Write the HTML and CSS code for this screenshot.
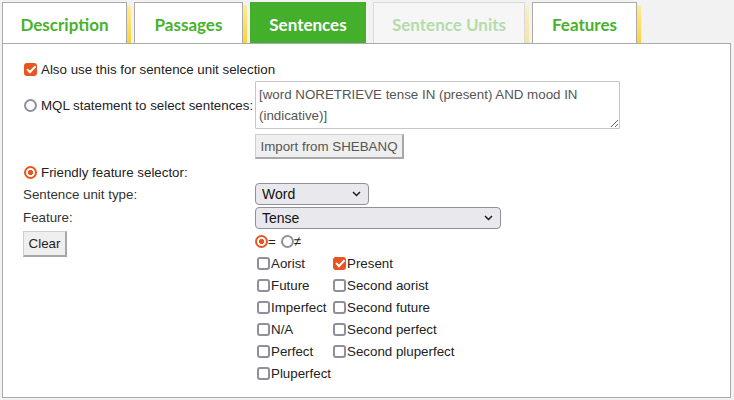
FILE: index.html
```html
<!DOCTYPE html>
<html>
<head>
<meta charset="utf-8">
<link rel="stylesheet" href="styles.css">
</head>
<body>
<div class="tabs">
  <div class="tab t-desc">Description</div>
  <div class="tab t-pass">Passages</div>
  <div class="tab t-sent active">Sentences</div>
  <div class="tab t-units disabled">Sentence Units</div>
  <div class="tab t-feat">Features</div>
</div>
<div class="panel">
  <div class="form">
    <label class="full opt row1"><input type="checkbox" class="cb" checked> Also use this for sentence unit selection</label>

    <label class="lbl opt mql"><input type="radio" name="sel" class="rb"> MQL statement to select sentences:</label>
    <textarea class="mqlbox">[word NORETRIEVE tense IN (present) AND mood IN (indicative)]</textarea>
    <div class="spacer"></div>
    <div class="importrow"><button class="btn import">Import from SHEBANQ</button></div>

    <label class="full opt friendly"><input type="radio" name="sel" class="rb" checked> Friendly feature selector:</label>

    <div class="lbl plain">Sentence unit type:</div>
    <div class="selwrap sel-word">
      <select class="sel"><option>Word</option></select>
      <svg class="chev" width="9" height="6" viewBox="0 0 9 6"><path d="M1 1 L4.5 4.5 L8 1" fill="none" stroke="#1c1c1c" stroke-width="1.5"/></svg>
    </div>

    <div class="lbl plain">Feature:</div>
    <div class="selwrap sel-feat">
      <select class="sel"><option>Tense</option></select>
      <svg class="chev" width="9" height="6" viewBox="0 0 9 6"><path d="M1 1 L4.5 4.5 L8 1" fill="none" stroke="#1c1c1c" stroke-width="1.5"/></svg>
    </div>

    <div class="clearcell"><button class="btn clear">Clear</button></div>
    <div class="values">
      <div class="eqrow">
        <label class="eq"><input type="radio" name="eq" class="rb" checked>=</label>
        <label class="eq"><input type="radio" name="eq" class="rb">≠</label>
      </div>
      <div class="checks">
        <label class="ck"><input type="checkbox" class="cb">Aorist</label>
        <label class="ck"><input type="checkbox" class="cb" checked>Present</label>
        <label class="ck"><input type="checkbox" class="cb">Future</label>
        <label class="ck"><input type="checkbox" class="cb">Second aorist</label>
        <label class="ck"><input type="checkbox" class="cb">Imperfect</label>
        <label class="ck"><input type="checkbox" class="cb">Second future</label>
        <label class="ck"><input type="checkbox" class="cb">N/A</label>
        <label class="ck"><input type="checkbox" class="cb">Second perfect</label>
        <label class="ck"><input type="checkbox" class="cb">Perfect</label>
        <label class="ck"><input type="checkbox" class="cb">Second pluperfect</label>
        <label class="ck"><input type="checkbox" class="cb">Pluperfect</label>
      </div>
    </div>
  </div>
</div>
</body>
</html>
```

FILE: styles.css
```css
html, body {
  margin: 0;
  padding: 0;
  background: #f2f2f2;
}
body {
  padding: 2px;
  font-family: "Liberation Sans", Arial, sans-serif;
  font-size: 13.33px;
  color: #333;
}

/* Tabs */
.tabs {
  display: flex;
  gap: 7px;
  height: 41px;
}
.tab {
  position: relative;
  box-sizing: border-box;
  height: 41px;
  border: 1px solid #aaa;
  border-bottom: none;
  background: #fff;
  color: #48b22b;
  font-family: Lato, "Open Sans", sans-serif;
  font-weight: 700;
  font-size: 17px;
  display: flex;
  align-items: center;
  justify-content: center;
  padding-top: 2px;
}
.tab::after {
  content: "";
  position: absolute;
  right: -5px;
  top: 2px;
  bottom: 0;
  width: 4px;
  border-radius: 0 3px 0 0;
  background: linear-gradient(#ffec9a, #ffd234);
}
.t-desc { width: 125px; }
.t-pass { width: 109px; }
.t-sent { width: 116px; }
.t-units { width: 152px; }
.t-feat { width: 105px; }
.tab.active {
  background: #43af2b;
  border-color: #43af2b;
  color: #fff;
}
.tab.active::after { display: none; }
.tab.disabled {
  background: #f6f6f6;
  border-color: #dadada;
  color: #b4dcaa;
}
.tab.disabled::after { opacity: 0.45; }

/* Panel */
.panel {
  box-sizing: border-box;
  width: 729px;
  height: 355px;
  background: #fff;
  border: 1px solid #aaa;
  padding: 15px 20px 0 20px;
}
.form {
  display: grid;
  grid-template-columns: 232px 1fr;
  align-items: center;
}
.full { grid-column: 1 / 3; }
.opt {
  display: flex;
  align-items: center;
  gap: 4px;
  color: #222;
}
.opt .cb, .opt .rb { margin-left: 1px; }
.row1 { height: 20px; }
.mql { align-self: center; margin-top: 3px; }
.mqlbox {
  box-sizing: border-box;
  width: 365px;
  height: 48px;
  margin: 2px 0 0 0;
  padding: 2px 3px;
  border: 1px solid #c6c6c6;
  border-radius: 1px;
  font-family: "Liberation Sans", Arial, sans-serif;
  font-size: 13.33px;
  line-height: 21px;
  color: #555;
  resize: vertical;
  display: block;
}
.importrow { margin-top: 5px; }
.btn {
  box-sizing: border-box;
  font-family: "Liberation Sans", Arial, sans-serif;
  font-size: 13.33px;
  background: #efefef;
  border: 1px solid #cfcfcf;
  border-right: 2px solid #a8a8a8;
  border-bottom: 2px solid #a8a8a8;
  border-radius: 0;
  margin: 0;
  display: block;
  white-space: nowrap;
}
.import {
  width: 149px;
  height: 25px;
  color: #555;
  padding: 0;
}
.friendly { height: 20px; margin-top: 3px; }
.plain { color: #333; }
.selwrap {
  position: relative;
  height: 22px;
}
.sel-word { width: 114px; margin-top: 1px; }
.sel-feat { width: 246px; margin-top: 2px; }
.lbl.plain { margin-top: 1px; }
.sel {
  appearance: none;
  -webkit-appearance: none;
  box-sizing: border-box;
  width: 100%;
  height: 22px;
  margin: 0;
  padding: 0 20px 0 6px;
  background: #e9e9ed;
  border: 1px solid #8f8f9d;
  border-radius: 4px;
  font-family: "Liberation Sans", Arial, sans-serif;
  font-size: 14px;
  color: #111;
}
.chev {
  position: absolute;
  right: 8px;
  top: 8px;
  pointer-events: none;
}
.clearcell { align-self: start; margin-top: 2px; }
.clear {
  width: 44px;
  height: 26px;
  color: #222;
  padding: 0;
}
.values { align-self: start; margin-top: 2px; }
.eqrow {
  display: flex;
  align-items: center;
  height: 21px;
}
.eq {
  display: flex;
  align-items: center;
  margin-right: 5px;
  color: #222;
}
.checks {
  display: grid;
  grid-template-columns: auto auto;
  justify-content: start;
  column-gap: 2px;
  grid-auto-rows: 22px;
  padding-left: 2px;
}
.ck {
  display: flex;
  align-items: center;
  gap: 1px;
  color: #222;
}

/* Custom controls (Firefox-like) */
.cb, .rb {
  appearance: none;
  -webkit-appearance: none;
  box-sizing: border-box;
  width: 13px;
  height: 13px;
  margin: 0;
  border: 2px solid #8f8f9d;
  background: #fff;
  position: relative;
  flex: none;
}
.cb { border-radius: 3px; }
.cb:checked {
  background: #e95420;
  border-color: #e95420;
}
.cb:checked::before {
  content: "";
  position: absolute;
  left: 2.5px;
  top: -0.5px;
  width: 3px;
  height: 6.5px;
  border: solid #fff;
  border-width: 0 2px 2px 0;
  transform: rotate(45deg);
}
.rb { border-radius: 50%; }
.rb:checked {
  border-color: #e95420;
  background: radial-gradient(circle, #e95420 0 2.3px, #fff 2.9px);
}
```
